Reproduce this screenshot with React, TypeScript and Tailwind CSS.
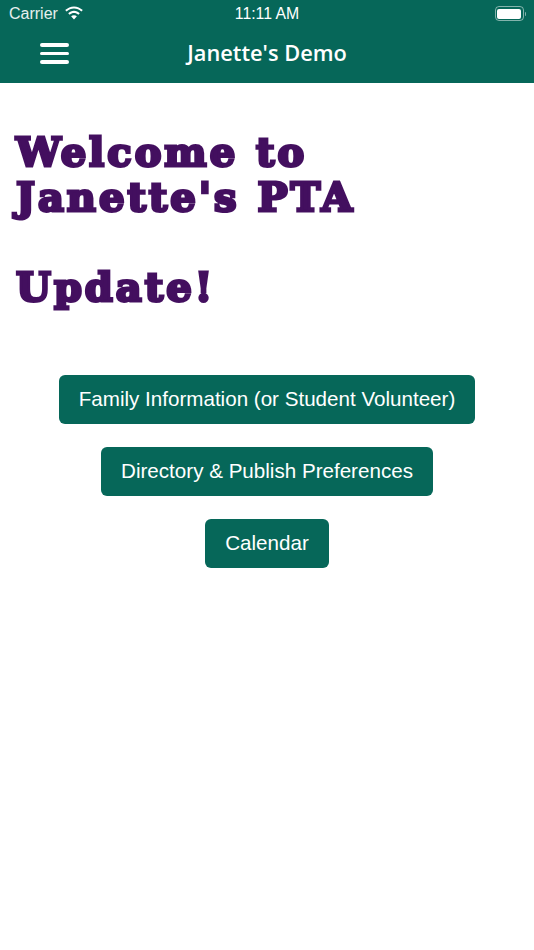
const buttons = ['Family Information (or Student Volunteer)', 'Directory & Publish Preferences', 'Calendar'];

function Wifi() {
  return (
    <svg width="20" height="15" viewBox="0 0 20 15" fill="#fff">
      <path d="M10 2.6c2.8 0 5.4 1.1 7.4 3l1.4-1.5C16.4 1.800 13.300.4 10 .4S3.600 1.800 1.200 4.100l1.400 1.500c2-1.900 4.600-3 7.400-3z" />
      <path d="M10 7c1.600 0 3.100.6 4.300 1.700l1.500-1.500C14.200 5.700 12.200 4.800 10 4.800s-4.200.9-5.800 2.400l1.500 1.500C6.900 7.600 8.400 7 10 7z" />
      <path d="M10 9.200c-1.100 0-2.100.4-2.900 1.100L10 13.400l2.900-3.100c-.8-.7-1.800-1.100-2.900-1.100z" />
    </svg>
  );
}

function Battery() {
  return (
    <div className="flex items-center gap-[1px]">
      <div className="w-[29px] h-[15px] rounded-[4px] border border-white/50 p-[1.5px]">
        <div className="w-full h-full rounded-[2px] bg-white" />
      </div>
      <div className="w-[1.5px] h-[4px] rounded-r-sm bg-white/50" />
    </div>
  );
}

export default function App() {
  return (
    <div className="min-h-[950px] bg-white font-['Liberation_Sans',sans-serif]">
      <header className="h-[83px] bg-[#066759] text-white">
        <div className="h-[27px] flex items-center justify-between pl-[9px] pr-[8px] relative">
          <div className="flex items-center gap-[6px] text-[16px] text-white/90">
            Carrier
            <Wifi />
          </div>
          <div className="absolute left-0 right-0 text-center text-[15.8px] font-medium">11:11 AM</div>
          <Battery />
        </div>
        <div className="h-[55px] flex items-center pl-[40px] relative pb-[2px]">
          <div className="flex flex-col gap-[5px] w-[29px]">
            <div className="h-[3.5px] rounded-full bg-white" />
            <div className="h-[3.5px] rounded-full bg-white" />
            <div className="h-[3.5px] rounded-full bg-white" />
          </div>
          <div className="absolute left-0 right-0 text-center font-['Open_Sans',sans-serif] font-semibold text-[21.8px]">
            Janette's Demo
          </div>
        </div>
      </header>
      <h1 className="pt-[46px] pl-[16px] font-['DejaVu_Serif',serif] font-bold text-[40px] leading-[45px] text-[#430f5f] [-webkit-text-stroke:3px_#430f5f] tracking-[3px] [word-spacing:1px] [will-change:transform]">
        Welcome to
        <br />
        Janette's PTA
        <br />
        <br />
        Update!
      </h1>
      <div className="mt-[65.5px] flex flex-col items-center gap-[23px]">
        {buttons.map((label) => (
          <button key={label} className="h-[49px] px-[20px] rounded-[6px] bg-[#066759] text-white text-[20.6px]">
            {label}
          </button>
        ))}
      </div>
    </div>
  );
}
